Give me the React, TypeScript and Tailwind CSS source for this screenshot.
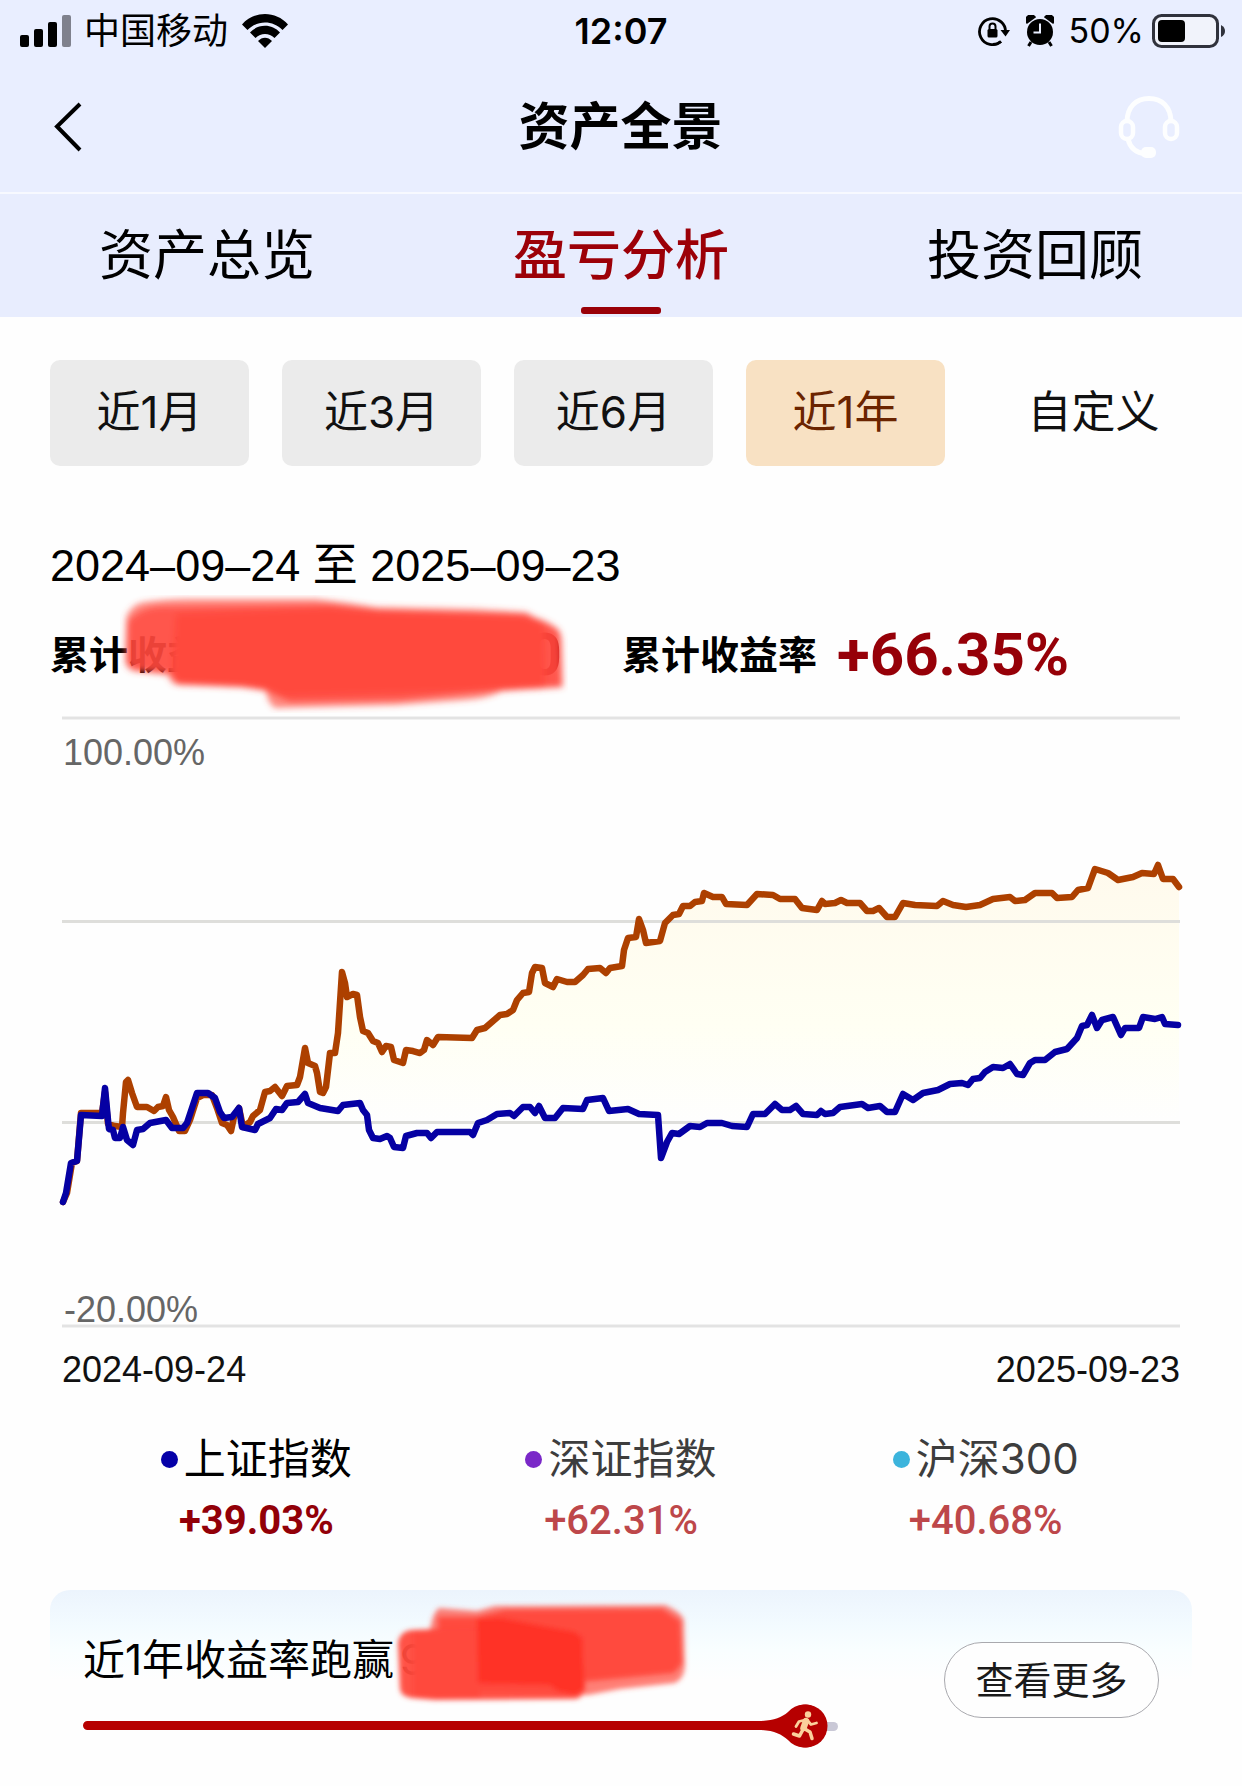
import React from "react";

const portfolio =
  "63,1202 67,1193 72,1163 77,1161 81,1113 102,1113 105,1092 108,1124 115,1126 122,1127 123,1113 126,1082 128,1080 132,1093 137,1107 147,1107 154,1111 158,1107 163,1106 166,1097 169,1110 173,1117 179,1131 185,1131 190,1120 197,1098 203,1095 212,1095 217,1108 222,1123 227,1125 231,1131 234,1117 239,1108 243,1127 250,1122 253,1116 260,1110 265,1092 270,1091 275,1087 282,1096 287,1086 297,1085 300,1077 305,1048 308,1063 315,1066 317,1073 320,1092 323,1093 326,1087 330,1053 335,1053 338,1033 342,972 345,983 347,997 353,994 357,995 360,1017 363,1031 368,1033 373,1041 378,1043 382,1052 386,1046 391,1047 394,1060 403,1063 406,1050 413,1051 420,1053 424,1050 427,1040 433,1045 438,1037 472,1038 477,1030 485,1028 500,1015 507,1014 513,1010 517,1000 523,993 529,992 532,973 535,967 542,968 545,983 553,987 557,979 567,982 575,982 583,975 588,969 600,968 606,973 610,968 622,966 624,950 628,938 636,937 639,919 643,930 646,943 660,941 665,923 673,915 679,914 683,906 690,906 695,902 702,901 704,893 713,897 722,897 726,904 747,905 757,894 773,895 780,899 795,899 802,908 817,910 822,901 825,904 835,903 841,900 847,903 860,903 867,911 873,911 879,908 887,917 895,917 903,903 915,905 937,906 943,901 953,905 966,907 980,905 993,899 1010,897 1015,901 1025,900 1035,893 1052,893 1057,898 1072,897 1078,890 1088,888 1092,877 1095,869 1108,873 1118,880 1133,877 1142,873 1154,874 1158,865 1163,879 1173,879 1179,887";

const shanghai =
  "63,1202 66,1193 71,1163 77,1161 81,1115 102,1116 105,1088 108,1120 109,1129 113,1130 115,1138 120,1138 123,1127 127,1140 133,1145 137,1130 143,1129 150,1123 166,1120 172,1128 183,1128 187,1123 192,1108 197,1093 208,1093 215,1098 220,1112 224,1118 232,1117 239,1108 242,1127 255,1130 258,1124 270,1118 276,1109 282,1110 287,1103 298,1102 305,1094 308,1103 320,1108 338,1111 343,1105 360,1103 363,1110 367,1115 369,1130 373,1138 380,1139 387,1136 390,1138 394,1147 403,1148 406,1136 417,1133 427,1133 431,1138 437,1132 470,1132 473,1135 478,1123 487,1120 497,1114 510,1113 514,1116 523,1107 530,1107 535,1113 539,1106 545,1118 555,1118 563,1108 583,1109 587,1100 603,1098 609,1111 628,1109 639,1114 658,1115 661,1158 667,1142 672,1133 679,1134 690,1126 700,1127 707,1123 722,1123 732,1126 747,1127 753,1114 765,1114 775,1104 782,1110 790,1110 796,1106 803,1114 817,1115 821,1111 825,1114 833,1113 840,1107 862,1104 868,1108 880,1106 887,1112 895,1112 903,1094 913,1100 923,1093 938,1090 950,1084 962,1083 968,1085 973,1079 980,1078 985,1072 993,1067 1003,1068 1010,1064 1017,1074 1023,1075 1030,1063 1035,1060 1045,1060 1055,1052 1067,1049 1077,1038 1082,1026 1087,1025 1092,1015 1097,1028 1102,1020 1113,1017 1121,1035 1125,1028 1139,1028 1143,1017 1155,1019 1162,1017 1165,1024 1178,1025";

function StatusBar() {
  return (
    <div className="grid h-[62px] grid-cols-3 items-center">
      <div className="flex items-center pl-5">
        <svg width="52" height="32" viewBox="0 0 52 32" aria-hidden="true">
          <rect x="0" y="20" width="9" height="12" rx="2" />
          <rect x="14" y="14" width="9" height="18" rx="2" />
          <rect x="28" y="7" width="9" height="25" rx="2" />
          <rect x="42" y="0" width="9" height="32" rx="2" fill="#7f818d" />
        </svg>
        <span className="ml-3 text-[36px] leading-[40px]">中国移动</span>
        <svg className="ml-[14px]" width="46" height="34" viewBox="0 0 46 34" aria-hidden="true">
          <path d="M0 10.500C12-3.500 34-3.500 46 10.500L40.500 16C31 6 15 6 5.500 16Z" />
          <path d="M8 18.500C16 9.500 30 9.500 38 18.500L32.500 24C27 18.500 19 18.500 13.500 24Z" />
          <path d="M16 27C20 22.500 26 22.500 30 27L23 34Z" />
        </svg>
      </div>
      <div className="text-center text-[36px] leading-[40px] font-semibold">12:07</div>
      <div className="flex items-center justify-end pr-4">
        <svg width="32" height="32" viewBox="0 0 32 32" fill="none" stroke="#000" aria-hidden="true">
          <path d="M27.500 17.500A13 13 0 1 0 23 26.500" strokeWidth="2.800" />
          <path d="M22.500 15H32L27.500 21.500Z" fill="#000" stroke="none" />
          <path d="M23 26.500A13 13 0 0 1 15 29.500" strokeWidth="2.800" />
          <rect x="9.500" y="14" width="10" height="8.500" rx="1.500" fill="#000" stroke="none" />
          <path d="M11.500 14.500V11.500a3 3 0 0 1 6 0V14.500" strokeWidth="2" />
        </svg>
        <svg className="ml-4" width="28" height="32" viewBox="0 0 28 32" aria-hidden="true">
          <circle cx="14" cy="17" r="13" />
          <path d="M1 8A5 5 0 0 1 9 2ZM27 8A5 5 0 0 0 19 2Z" stroke="#000" strokeWidth="1.500" />
          <path d="M5 27L2.500 31M23 27L25.500 31" stroke="#000" strokeWidth="3" />
          <path d="M14 8.500V17.500H7.500" fill="none" stroke="#e9eeff" strokeWidth="2" />
        </svg>
        <span className="ml-[14px] text-[34px] leading-[40px]">50%</span>
        <svg className="ml-2" width="74" height="34" viewBox="0 0 74 34" aria-hidden="true">
          <rect x="1.500" y="1.500" width="64" height="31" rx="8" fill="#f1f3fb" stroke="#30323c" strokeWidth="3" />
          <rect x="6" y="6" width="27" height="22" rx="4" />
          <path d="M69 11Q73 13 73 17Q73 21 69 23Z" fill="#30323c" />
        </svg>
      </div>
    </div>
  );
}

const tabs = ["资产总览", "盈亏分析", "投资回顾"];
const ranges = ["近1月", "近3月", "近6月", "近1年"];

function Header() {
  return (
    <header className="bg-[#e9eeff]">
      <StatusBar />
      <div className="flex h-[130px] items-center justify-between pr-[61px] pl-[54px]">
        <button type="button" aria-label="返回" className="w-[70px]">
          <svg width="28" height="50" viewBox="0 0 28 50" fill="none" stroke="#000" strokeWidth="4" aria-hidden="true">
            <path d="M26 2L3 24.500L26 48" />
          </svg>
        </button>
        <h1 className="text-[51px] leading-[64px] font-bold">资产全景</h1>
        <button type="button" aria-label="客服" className="w-[64px]">
          <svg width="64" height="64" viewBox="0 0 64 64" fill="none" stroke="#fdfeff" strokeWidth="5" aria-hidden="true">
            <path d="M10 27C10 12 19 3.500 32 3.500S54 12 54 27" />
            <rect x="4" y="26" width="12" height="18" rx="6" strokeWidth="4.500" />
            <rect x="48" y="26" width="12" height="18" rx="6" strokeWidth="4.500" />
            <path d="M11 44C13 53 20 58 29 59" />
            <rect x="24" y="52" width="15" height="11" rx="5" fill="#fdfeff" stroke="none" />
          </svg>
        </button>
      </div>
      <nav className="grid h-[125px] grid-cols-3 border-t-2 border-[#f7f9ff] bg-[#e8edfe]">
        {tabs.map((t, i) =>
          i === 1 ? (
            <button key={t} type="button" aria-current="page" className="relative text-[54px] leading-[72px] font-medium text-[#9c0008]">
              {t}
              <span className="absolute bottom-[3px] left-1/2 h-[7px] w-[80px] -translate-x-1/2 rounded-[3px] bg-[#990008]" />
            </button>
          ) : (
            <button key={t} type="button" className="text-[54px] leading-[72px]">
              {t}
            </button>
          ),
        )}
      </nav>
    </header>
  );
}

function Ranges() {
  return (
    <div className="mt-[43px] flex pl-[50px] text-[44px] leading-[60px] text-[#111]">
      <div className="flex gap-[33px]">
        {ranges.map((r, i) => (
          <button
            key={r}
            type="button"
            aria-pressed={i === 3}
            className={
              i === 3
                ? "h-[106px] w-[199px] rounded-[10px] bg-[#f8e1c3] pb-[3px] text-[#6b2400]"
                : "h-[106px] w-[199px] rounded-[10px] bg-[#ebebeb] pb-[3px]"
            }
          >
            {r}
          </button>
        ))}
      </div>
      <button type="button" className="flex-1 pb-[3px]">
        自定义
      </button>
    </div>
  );
}

function Summary() {
  return (
    <div className="px-[50px]">
      <p className="mt-[70px] font-['Liberation_Sans','Noto_Sans_CJK_SC',sans-serif] text-[45px] leading-[60px]">
        2024–09–24 至 2025–09–23
      </p>
      <div className="mt-[29px] flex h-[60px] items-center">
        <div className="relative flex h-[60px] w-[572px] items-center">
          <span className="text-[39px] leading-[60px] font-bold">累计收益</span>
          <span className="ml-auto pr-[60px] font-['Roboto',sans-serif] text-[60px] leading-[60px] font-bold text-[#8a0008]">0</span>
          <svg
            className="absolute top-[-30px] left-[70px]"
            width="448"
            height="118"
            viewBox="120 595 448 118"
            fill="#ff483c"
            aria-hidden="true"
          >
            <defs>
              <filter id="soft" x="-5%" y="-15%" width="110%" height="130%">
                <feGaussianBlur stdDeviation="3" />
              </filter>
            </defs>
            <g filter="url(#soft)">
              <path
                opacity=".65"
                d="M125 660L126 618Q131 604 145 602Q165 599 190 599L316 599Q345 602 376 607L474 609L526 612L535 617Q561 625 562 640L563 687L502 691Q490 698 465 700L395 705L275 708Q267 702 266 691L241 687L178 685Q170 684 168 675L134 671Q125 669 125 660Z"
              />
              <path
                opacity=".78"
                d="M127 662L128 622Q140 608 160 607L330 605L380 611L526 615L559 630L561 687L500 690L400 700L290 702L264 689L241 687L178 684L170 673L134 670Z"
              />
              <path d="M176 614L330 608L380 611L520 615L544 624L545 688L500 690L280 696L262 689L241 686L178 683L172 672Z" />
            </g>
          </svg>
        </div>
        <div className="flex items-center gap-[20px]">
          <span className="text-[39px] leading-[60px] font-bold">累计收益率</span>
          <strong className="font-['Roboto',sans-serif] text-[60px] leading-[60px] font-bold text-[#960008]">+66.35%</strong>
        </div>
      </div>
    </div>
  );
}

function Chart() {
  return (
    <figure className="mx-[62px] mt-[31px] font-['Liberation_Sans',sans-serif] text-[36px] leading-[40px]">
      <div className="relative text-[#666]">
        <svg className="block h-auto w-full overflow-visible" viewBox="62 716 1118 612" fill="none" role="img" aria-label="收益率走势">
          <defs>
            <linearGradient id="area" gradientUnits="userSpaceOnUse" x1="0" y1="870" x2="0" y2="1125">
              <stop offset="0" stopColor="#fffaed" />
              <stop offset=".6" stopColor="#fffff3" />
              <stop offset="1" stopColor="#fefefe" />
            </linearGradient>
          </defs>
          <polygon points={portfolio + " 1179,1123 63,1123"} fill="url(#area)" />
          <path d="M62 718H1180M62 1326H1180" stroke="#e3e3e3" strokeWidth="3" />
          <path d="M62 921.500H1180M62 1122.500H1180" stroke="#dededb" strokeWidth="3" />
          <polyline points={portfolio} stroke="#ad4000" strokeWidth="6.500" strokeLinejoin="round" strokeLinecap="round" />
          <polyline points={shanghai} stroke="#0500a3" strokeWidth="6.500" strokeLinejoin="round" strokeLinecap="round" />
        </svg>
        <span className="absolute top-[17px] left-[1px]">100.00%</span>
        <span className="absolute bottom-[-2px] left-[2px]">-20.00%</span>
      </div>
      <figcaption className="mt-[22px] flex justify-between text-[#111]">
        <time>2024-09-24</time>
        <time>2025-09-23</time>
      </figcaption>
    </figure>
  );
}

const indices = [
  { name: "上证指数", value: "+39.03%", dot: "bg-[#0500a8]", text: "text-black", pct: "text-[#920008] font-bold" },
  { name: "深证指数", value: "+62.31%", dot: "bg-[#7a28c8]", text: "text-[#3d3d3d]", pct: "text-[#bd474a] font-medium" },
  { name: "沪深300", value: "+40.68%", dot: "bg-[#3cb4dc]", text: "text-[#3d3d3d]", pct: "text-[#bd474a] font-medium" },
];

function Legend() {
  return (
    <div className="mt-[44px] grid grid-cols-3 px-[74px]">
      {indices.map((x) => (
        <button key={x.name} type="button" className="flex flex-col items-center">
          <span className={"flex items-center gap-[6px] text-[42px] leading-[50px] " + x.text}>
            <span className={"size-[17px] rounded-full " + x.dot} />
            {x.name}
          </span>
          <span className={"mt-[13px] font-['Roboto',sans-serif] text-[40px] leading-[48px] " + x.pct}>{x.value}</span>
        </button>
      ))}
    </div>
  );
}

function BeatCard() {
  return (
    <section className="mx-[50px] mt-[45px] flex items-start gap-[106px] rounded-t-[20px] bg-[linear-gradient(#ecf4fd_0px,#f3fbff_36px,#f9feff_60px,#fefefe_90px)] px-[33px] pt-[45px]">
      <div className="flex-1">
        <p className="relative text-[42px] leading-[50px] whitespace-nowrap">
          近1年收益率跑赢
          <span className="ml-[6px]">9</span>
          <svg
            className="absolute top-[-36px] left-[308px]"
            width="302"
            height="108"
            viewBox="391 1598 302 108"
            fill="#ff483c"
            aria-hidden="true"
          >
            <defs>
              <filter id="soft2" x="-5%" y="-10%" width="110%" height="120%">
                <feGaussianBlur stdDeviation="2.500" />
              </filter>
            </defs>
            <g filter="url(#soft2)">
              <path opacity=".7" d="M430 1630Q432 1612 439 1607L477 1610L495 1605L665 1604Q683 1612 684 1620L685 1665Q684 1678 675 1682L620 1688L588 1694L430 1690Z" />
              <path opacity=".95" d="M438 1616L477 1616L505 1609L662 1608L680 1620L682 1662L674 1672L590 1680L440 1690Z" />
              <path opacity=".95" d="M398 1642Q400 1630 412 1629L483 1626L584 1633L585 1688Q582 1698 574 1698L435 1699L412 1697Q401 1696 400 1688Z" />
              <path d="M413 1630H480V1697H413Z" />
              <path fill="#ff3326" d="M477 1618L500 1617L575 1631L582 1637L584 1688L575 1694L558 1690L550 1684L478 1682Z" />
            </g>
          </svg>
        </p>
        <div className="mt-[19px]" role="progressbar" aria-label="跑赢比例" aria-valuenow={96}>
          <svg className="block h-auto w-full" viewBox="0 0 755 44" aria-hidden="true">
            <rect x="700" y="18" width="55" height="9" rx="4.500" fill="#c9c8d6" />
            <path
              fill="#b60000"
              d="M4.500 17H675C690 17 698 14 705 8A21.500 21.500 0 1 1 705 36C698 30 690 26 675 26H4.500A4.500 4.500 0 0 1 4.500 17Z"
            />
            <circle cx="723" cy="22" r="21.500" fill="#b60000" />
            <circle cx="725" cy="10.500" r="3.200" fill="#fbd09c" />
            <g fill="none" stroke="#fbd09c" strokeLinecap="round" strokeLinejoin="round">
              <path d="M723 17L720.500 24" strokeWidth="6.500" />
              <path d="M722 16L716 17.500L713 22.500M724 16L728 20.500L733.500 19" strokeWidth="2.800" />
              <path d="M721 24.500L727 28L729 34.500M720 25.500L716.500 32L710.500 30" strokeWidth="3.500" />
            </g>
          </svg>
        </div>
      </div>
      <button
        type="button"
        className="mt-[7px] h-[76px] w-[215px] rounded-full border border-[#a9a9ae] bg-[#fefefe] text-[38px] leading-[50px] text-[#1a1a1a]"
      >
        查看更多
      </button>
    </section>
  );
}

export default function App() {
  return (
    <main className="min-h-screen overflow-x-hidden bg-[#fefefe] pb-[38px] font-['Inter','Noto_Sans_CJK_SC',sans-serif] text-black">
      <Header />
      <Ranges />
      <Summary />
      <Chart />
      <Legend />
      <BeatCard />
    </main>
  );
}
